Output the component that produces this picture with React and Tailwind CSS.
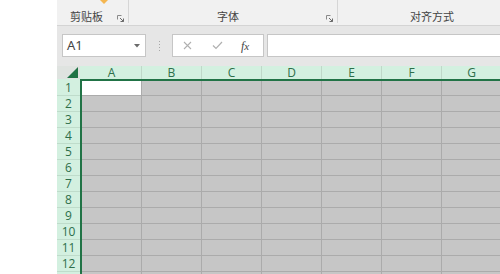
import React from "react";

const cols = ["A", "B", "C", "D", "E", "F", "G"];
const rows = [1, 2, 3, 4, 5, 6, 7, 8, 9, 10, 11, 12, 13];

function Launcher() {
  return (
    <svg width="7" height="7" viewBox="0 0 7 7" className="shrink-0">
      <path d="M0.5 0.5 H4.5 M0.5 0.5 V4.5" stroke="#8a8a8a" strokeWidth="1" fill="none" />
      <path d="M3 3 L6.5 6.5 M6.5 3.5 V6.5 H3.5" stroke="#6a6a6a" strokeWidth="1" fill="none" />
    </svg>
  );
}

export default function App() {
  return (
    <div
      className="flex w-[500px] h-[274px] overflow-hidden bg-white"
      style={{ fontFamily: '"Noto Sans", "Noto Sans CJK SC", sans-serif' }}
    >
      <div className="w-[57px] shrink-0 bg-white" />
      <div className="flex flex-col flex-1 min-w-0">
        {/* Ribbon */}
        <div className="relative flex h-[26px] shrink-0 bg-[#f1f1f1] border-b border-[#d4d4d4]">
          <div className="relative flex items-end w-[72px] h-[23px] border-r border-[#d6d6d6]">
            <div className="absolute left-[43px] top-0 w-0 h-0 border-l-[4px] border-r-[4px] border-t-[4px] border-l-transparent border-r-transparent border-t-[#f4b650]" />
            <span className="ml-[13px] text-[11px] leading-[14px] text-[#444]" style={{ fontFamily: '"Noto Sans CJK SC", sans-serif' }}>剪贴板</span>
            <span className="ml-auto mr-[4px] mb-[1px]"><Launcher /></span>
          </div>
          <div className="relative flex items-end w-[209px] h-[23px] border-r border-[#d6d6d6]">
            <span className="ml-[88px] text-[11px] leading-[14px] text-[#444]" style={{ fontFamily: '"Noto Sans CJK SC", sans-serif' }}>字体</span>
            <span className="ml-auto mr-[4px] mb-[1px]"><Launcher /></span>
          </div>
          <div className="relative flex items-end flex-1 h-[23px]">
            <span className="ml-[72px] text-[11px] leading-[14px] text-[#444]" style={{ fontFamily: '"Noto Sans CJK SC", sans-serif' }}>对齐方式</span>
          </div>
        </div>

        {/* Formula bar */}
        <div className="flex h-[40px] shrink-0 bg-[#e6e6e6] pt-[8px] pl-[5px]">
          <div className="flex items-center w-[84px] h-[23px] bg-white border border-[#c6c6c6] px-[4px]">
            <span className="text-[13px] text-[#444]">A1</span>
            <svg width="6" height="4" viewBox="0 0 6 4" className="ml-auto mr-[1px]">
              <path d="M0 0 H6 L3 3.5 Z" fill="#6b6b6b" />
            </svg>
          </div>
          <div className="flex flex-col justify-center gap-[2px] w-[26px] h-[23px] items-center">
            <div className="w-[1px] h-[1px] bg-[#a8a8a8]" />
            <div className="w-[1px] h-[1px] bg-[#a8a8a8]" />
            <div className="w-[1px] h-[1px] bg-[#a8a8a8]" />
            <div className="w-[1px] h-[1px] bg-[#a8a8a8]" />
          </div>
          <div className="flex items-center w-[92px] h-[23px] bg-white border border-[#c6c6c6]">
            <svg width="9" height="9" viewBox="0 0 9 9" className="ml-[10px]">
              <path d="M1 1 L8 8 M8 1 L1 8" stroke="#b0b0b0" strokeWidth="1.1" />
            </svg>
            <svg width="11" height="9" viewBox="0 0 11 9" className="ml-[20px]">
              <path d="M1 4.5 L4 7.5 L10 1" stroke="#b0b0b0" strokeWidth="1.2" fill="none" />
            </svg>
            <span
              className="ml-[18px] text-[11px] italic text-[#444]"
              style={{ fontFamily: '"Liberation Serif", serif' }}
            >
              <span className="text-[12px]">f</span>x
            </span>
          </div>
          <div className="flex-1 h-[23px] bg-white border border-[#c6c6c6] border-r-0 ml-[3px]" />
        </div>

        {/* Grid */}
        <div
          className="grid grid-cols-[23px_2px_repeat(7,60px)] auto-rows-min"
          style={{ fontFamily: '"Open Sans", "Noto Sans", sans-serif' }}
        >
          {/* header row */}
          <div className="relative h-[13px] bg-[#dfe3e0]">
            <svg width="11" height="11" viewBox="0 0 11 11" className="absolute right-[2px] bottom-[1px]">
              <path d="M11 0 V11 H0 Z" fill="#217346" />
            </svg>
          </div>
          <div className="h-[13px] bg-[#d3f0e0]" />
          {cols.map((c) => (
            <div
              key={c}
              className="h-[13px] bg-[#d3f0e0] border-r border-[#bfd8c9] flex items-center justify-center text-[12px] leading-none text-[#2e6f4a]"
            >
              {c}
            </div>
          ))}
          {/* green line */}
          <div className="h-[2px] bg-[#d3f0e0]" />
          <div className="h-[2px] bg-[#217346]" />
          {cols.map((c) => (
            <div key={c + "g"} className="h-[2px] bg-[#217346]" />
          ))}
          {rows.map((r) => {
            const h = r === 1 ? "h-[15px]" : "h-[16px]";
            return (
              <React.Fragment key={r}>
                <div
                  className={`${h} bg-[#d3f0e0] border-b border-[#bfdccb] flex items-center justify-center text-[12px] leading-none text-[#2e6f4a]`}
                >
                  {r < 13 ? r : ""}
                </div>
                <div className={`${h} bg-[#217346]`} />
                {cols.map((c) => (
                  <div
                    key={c}
                    className={`${h} border-b border-r border-[#ababab] ${
                      r === 1 && c === "A" ? "bg-white" : "bg-[#c6c6c6]"
                    }`}
                  />
                ))}
              </React.Fragment>
            );
          })}
        </div>
      </div>
    </div>
  );
}
